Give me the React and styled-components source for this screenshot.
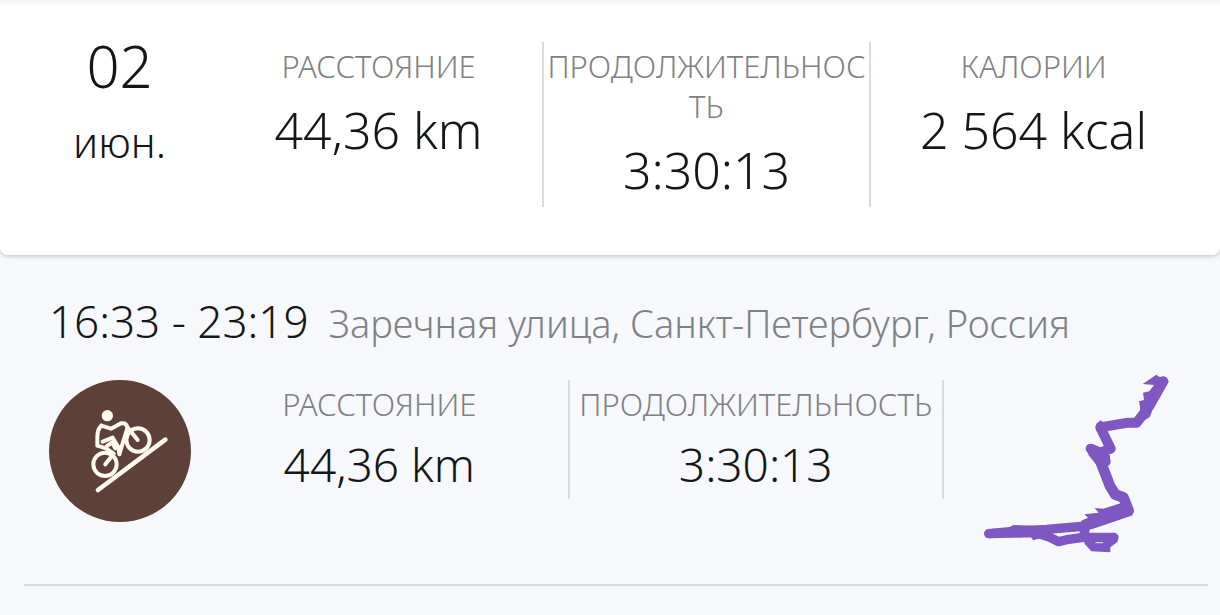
import React from "react";
import styled, { createGlobalStyle, ThemeProvider } from "styled-components";

const theme = {
  fontDefault: `"Noto Sans", "Open Sans", sans-serif`,
  colors: {
    page: "#f7f8fc",
    card: "#ffffff",
    ink: "#151617",
    muted: "#808184",
    line: "#dadbdf",
    sport: "#5d4037",
    track: "#7e57c2"
  }
};

const GlobalStyle = createGlobalStyle`
  * {
    box-sizing: border-box;
  }
  body {
    margin: 0;
    background: ${theme.colors.page};
    color: ${theme.colors.ink};
    font-family: ${theme.fontDefault};
    font-weight: 300;
  }
`;

const DayCard = styled.header`
  display: grid;
  grid-template-columns: 191px repeat(3, minmax(0, 1fr));
  padding: 42px 24px 48px;
  background: linear-gradient(#f3f3f4, ${({ theme }) => theme.colors.card} 6px);
  border-radius: 0 0 8px 8px;
  box-shadow: 0 1px 4px rgba(40, 42, 50, 0.3);
`;

const DayDate = styled.time`
  display: flex;
  flex-direction: column;
  align-items: center;
`;

const DayNumber = styled.span`
  font-size: 58px;
  line-height: 48px;
`;

const Month = styled.span`
  margin-top: 28px;
  font-size: 42px;
  line-height: 48px;
`;

const StatList = styled.dl`
  display: contents;
`;

const Stat = styled.div`
  min-height: ${({ $compact }) => ($compact ? "119px" : "165px")};
  padding-top: 4px;
  text-align: center;
  & + & {
    border-left: 2px solid ${({ theme }) => theme.colors.line};
  }
  ${({ $closed, theme }) =>
    $closed && `border-right: 2px solid ${theme.colors.line};`}
`;

const StatLabel = styled.dt`
  color: ${({ theme }) => theme.colors.muted};
  font-size: 31px;
  line-height: 40px;
  text-transform: uppercase;
  word-break: break-all;
`;

const StatValue = styled.dd`
  margin: 8px 0 0;
  font-size: ${({ $compact }) => ($compact ? "46px" : "50px")};
  line-height: ${({ $compact }) => ($compact ? "64px" : "72px")};
  white-space: nowrap;
`;

const Workout = styled.article`
  padding: 34px 24px 0 49px;
`;

const WorkoutHeading = styled.div`
  display: flex;
  align-items: baseline;
  gap: 20px;
  line-height: 64px;
  white-space: nowrap;
`;

const WorkoutTime = styled.span`
  font-size: 44px;
`;

const Place = styled.span`
  color: ${({ theme }) => theme.colors.muted};
  font-size: 38px;
`;

const WorkoutBody = styled.div`
  display: grid;
  grid-template-columns: 142px repeat(2, minmax(0, 1fr)) 252px;
  align-items: start;
  margin-top: 19px;
`;

const Lowered = styled.div`
  margin-top: 6px;
`;

const WorkoutStats = styled(Lowered)`
  display: grid;
  grid-column: span 2;
  grid-template-columns: repeat(2, minmax(0, 1fr));
`;

const Track = styled.svg`
  justify-self: center;
  width: 186px;
  height: 182px;
  margin-left: 12px;
`;

const Divider = styled.hr`
  height: 2px;
  margin: 28px 12px 0 24px;
  border: 0;
  background: ${({ theme }) => theme.colors.line};
`;

const SportIcon = () => (
  <svg width="142" height="142" viewBox="27 33 426 426" role="img" aria-label="Велосипед">
    <circle cx="240" cy="246" r="213" fill={theme.colors.sport} />
    <g fill="none" stroke="#fffaf0" strokeWidth="12" strokeLinecap="round" strokeLinejoin="round">
      <circle cx="202" cy="140" r="17" fill="#fffaf0" stroke="none" />
      <circle cx="195" cy="286" r="35" />
      <circle cx="294" cy="213" r="35" />
      <path d="M174 363L376 212" strokeWidth="14" />
      <path d="M184 170Q172 180 172 205V230L198 238L221 254L196 286" />
      <path d="M184 170L213 179L243 163Q258 160 262 174L293 213" />
      <path d="M188 218L218 206L235 234L238 256L250 216L262 178" />
      <path d="M200 232L216 220L226 238" />
    </g>
  </svg>
);

const RouteTrack = () => (
  <Track viewBox="39 42 558 546" role="img" aria-label="Маршрут">
    <g fill="none" stroke={theme.colors.track} strokeLinecap="round" strokeLinejoin="round">
      <path strokeWidth="30" d="M580 64L538 138L500 188L474 188L391 202L422 266L391 278L362 266" />
      <path strokeWidth="32" d="M372 279L406 304L392 306L420 378L436 404L460 412L476 452L350 494" />
      <path strokeWidth="28" d="M350 498L230 508L130 514L56 521" />
      <path strokeWidth="28" d="M58 521L130 519L195 518L240 532L265 545L290 539L340 532L348 494" />
    </g>
    <g fill={theme.colors.track}>
      <path d="M518 72L548 52L559 44L567 50L586 51L596 65L559 123L549 145L540 170L510 190L510 140L507 124L522 120L519 98L538 94L552 75Z" />
      <path d="M379 191L392 181L402 188L440 200L380 214Z" />
      <path d="M350 266L375 258L385 270L420 286L420 309L409 319L382 318L356 286Z" />
      <path d="M470 424L400 446L374 444L386 458L343 463L354 473L334 482L332 505L365 508L488 466Z" />
      <path d="M335 518H434Q446 522 446 533L442 546L421 562V577L364 574L344 552Z" />
      <path d="M120 500L130 495L205 498L235 503L225 530L190 541L182 530L120 532Z" />
    </g>
    <path d="M376 548H399" stroke="#eee3f7" strokeWidth="3" />
  </Track>
);

const dayStats = [
  { label: "Расстояние", value: "44,36 km" },
  { label: "Продолжительность", value: "3:30:13" },
  { label: "Калории", value: "2 564 kcal" }
];

const workoutStats = dayStats.slice(0, 2);

export default function App() {
  return (
    <ThemeProvider theme={theme}>
      <GlobalStyle />
      <main>
        <DayCard>
          <DayDate dateTime="06-02">
            <DayNumber>02</DayNumber>
            <Month>июн.</Month>
          </DayDate>
          <StatList>
            {dayStats.map(stat => (
              <Stat key={stat.label}>
                <StatLabel>{stat.label}</StatLabel>
                <StatValue>{stat.value}</StatValue>
              </Stat>
            ))}
          </StatList>
        </DayCard>
        <Workout>
          <WorkoutHeading>
            <WorkoutTime>16:33 - 23:19</WorkoutTime>
            <Place>Заречная улица, Санкт-Петербург, Россия</Place>
          </WorkoutHeading>
          <WorkoutBody>
            <Lowered>
              <SportIcon />
            </Lowered>
            <WorkoutStats>
              <StatList>
                {workoutStats.map((stat, index) => (
                  <Stat
                    key={stat.label}
                    $compact
                    $closed={index === workoutStats.length - 1}
                  >
                    <StatLabel>{stat.label}</StatLabel>
                    <StatValue $compact>{stat.value}</StatValue>
                  </Stat>
                ))}
              </StatList>
            </WorkoutStats>
            <RouteTrack />
          </WorkoutBody>
        </Workout>
        <Divider />
      </main>
    </ThemeProvider>
  );
}
